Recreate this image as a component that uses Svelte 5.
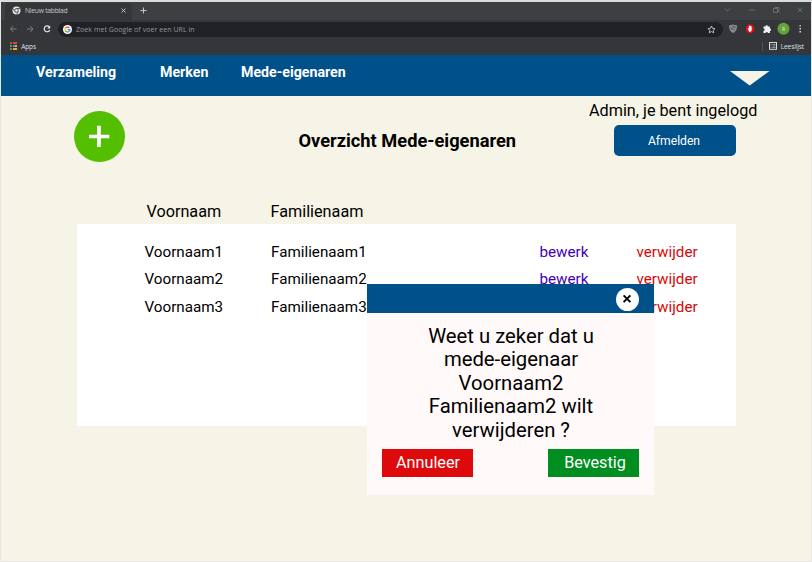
<script>
  const people = [1, 2, 3].map((n) => ({ first: `Voornaam${n}`, last: `Familienaam${n}` }));
  const question = ['Weet u zeker dat u', 'mede-eigenaar', 'Voornaam2', 'Familienaam2 wilt', 'verwijderen ?'];
  const appColors = ['#d34a3c', '#d34a3c', '#d34a3c', '#3fa35a', '#4a86e8', '#e0b03a', '#3fa35a', '#e0b03a', '#e0b03a'];
</script>

<div class="frame">
  <div class="browser">
    <div class="tabs">
      <div class="tab">
        <svg class="favicon" width="9" height="9" viewBox="0 0 18 18">
          <circle cx="9" cy="9" r="8" fill="#e4e5e7" />
          <path d="M9 5h7M5.500 11L2 5M12.500 11L9 17" stroke="#35363a" stroke-width="1.4" />
          <circle cx="9" cy="9" r="3.7" fill="#e4e5e7" stroke="#35363a" stroke-width="1.6" />
        </svg>
        <span class="title">Nieuw tabblad</span>
        <svg width="5" height="5" viewBox="0 0 5 5"><path d="M.5 .5l4 4M4.500 .5l-4 4" stroke="#cfd0d2" stroke-width=".9" /></svg>
      </div>
      <svg class="new" width="7" height="7" viewBox="0 0 7 7"><path d="M3.500 .5v6M.5 3.500h6" stroke="#c3c6c8" stroke-width="1" /></svg>
      <svg class="window" width="82" height="10" viewBox="0 0 82 10" fill="none" stroke="#73777a" stroke-width=".8">
        <path d="M3 3.500l2.500 2.500L8 3.500M27 5h6M51.500 3.500h4v4h-4zM53 3.500v-1h4v4h-1.500M75.500 2.500l5 5M80.500 2.500l-5 5" />
      </svg>
    </div>
    <div class="toolbar">
      <svg class="arrows" width="46" height="12" viewBox="0 0 46 12" fill="none">
        <path d="M7.500 6H1.500M4.300 3L1.500 6l2.800 3M18 6h6M21.200 3L24 6l-2.800 3" stroke="#818386" stroke-width=".9" />
        <path d="M40.300 3.900A2.900 2.900 0 1 0 40.800 7" stroke="#e3e4e6" stroke-width="1.200" />
        <path d="M41.200 2.500v3h-3z" fill="#e3e4e6" />
      </svg>
      <div class="omnibox">
        <svg width="9" height="9" viewBox="0 0 18 18">
          <circle cx="9" cy="9" r="9" fill="#fff" />
          <g fill="none" stroke-width="2.500">
            <path d="M12.700 5.700A5 5 0 0 0 4.700 6.500" stroke="#ea4335" />
            <path d="M4.700 6.500a5 5 0 0 0 0 5" stroke="#fbbc05" />
            <path d="M4.700 11.500a5 5 0 0 0 7.700 1.200" stroke="#34a853" />
            <path d="M12.400 12.700A5 5 0 0 0 14 9.200H9" stroke="#4285f4" />
          </g>
        </svg>
        <span>Zoek met Google of voer een URL in</span>
        <svg class="star" width="9" height="9" viewBox="0 0 18 18"><path d="M9 2l2.100 4.600 5 .6-3.700 3.400 1 5L9 13.100l-4.400 2.500 1-5L1.900 7.200l5-.6z" fill="none" stroke="#d4d5d7" stroke-width="1.700" /></svg>
      </div>
      <svg class="extensions" width="80" height="14" viewBox="0 0 80 14">
        <path d="M4 3.500l4-1 4 1c0 4-1 6-4 7.500C5 9.500 4 7.500 4 3.500z" fill="#8c8e91" />
        <path d="M5 5.500l5 3M5.800 8l4-4M7 3.500l4 2.500" stroke="#45464a" stroke-width=".7" />
        <path d="M23.300 2.500h3.400L29 4.800v3.900l-2.300 2.300h-3.400L21 8.700V4.800z" fill="#f00b12" />
        <path d="M22.800 6.300l.7-.2.4.7V4h.7v-.5h.7V4h.7v.5h.7v3.800l-1 1.400h-1.600z" fill="#fff" />
        <path d="M38.500 4.500h2a1.200 1.200 0 0 1 2.400 0h2v2.100a1.200 1.200 0 0 1 0 2.400v2h-2a1.100 1.100 0 0 0-2.200 0h-2.200V8.900a1.150 1.150 0 0 0 0-2.300z" fill="#f0f1f2" />
        <circle cx="58.500" cy="6.800" r="6" fill="#64a136" />
        <text x="58.500" y="9" text-anchor="middle">R</text>
        <path d="M74.500 3.200h1.400v1.400h-1.400zM74.500 6.100h1.400v1.400h-1.400zM74.500 9h1.400v1.400h-1.400z" fill="#e4e5e7" />
      </svg>
    </div>
    <div class="bookmarks">
      <div class="apps">
        {#each appColors as color}<i style="background:{color}"></i>{/each}
      </div>
      <span>Apps</span>
      <div class="reading">
        <svg width="8" height="8" viewBox="0 0 8 8" fill="none" stroke="#d8d9db"><rect x=".5" y=".5" width="7" height="6.800" /><path d="M1.500 2.500h1M3.500 2.500h3M1.500 4h1M3.500 4h3M1.500 5.500h1M3.500 5.500h3" stroke-width=".6" /></svg>
        <span>Leeslijst</span>
      </div>
    </div>
  </div>

  <nav>
    <a class="one">Verzameling</a>
    <a class="two">Merken</a>
    <a class="three">Mede-eigenaren</a>
    <svg width="40" height="15" viewBox="0 0 40 15"><path d="M0 0h39.500L19.700 14.500z" fill="#f6f4e6" /></svg>
  </nav>

  <main>
    <header>
      <button class="add" aria-label="Toevoegen">
        <svg width="51" height="51" viewBox="0 0 51 51"><path d="M25 14.800v21.300M15 25.500h20.300" stroke="#fff" stroke-width="3.700" /></svg>
      </button>
      <h1>Overzicht Mede-eigenaren</h1>
      <div class="account">
        <p>Admin, je bent ingelogd</p>
        <button>Afmelden</button>
      </div>
    </header>
    <div class="heads"><span>Voornaam</span><span>Familienaam</span></div>
    <section class="list">
      {#each people as person}
        <div class="row">
          <span>{person.first}</span>
          <span>{person.last}</span>
          <a class="edit">bewerk</a>
          <a class="delete">verwijder</a>
        </div>
      {/each}
    </section>
  </main>

  <div class="dialog" role="dialog">
    <div class="bar">
      <button class="close" aria-label="Sluiten">
        <svg width="23" height="23" viewBox="0 0 23 23"><path d="M7.600 7.300l6.800 6.800M14.400 7.300l-6.800 6.800" stroke="#000" stroke-width="1.900" /></svg>
      </button>
    </div>
    <div class="question">
      {#each question as line}<div>{line}</div>{/each}
    </div>
    <div class="actions">
      <button class="cancel">Annuleer</button>
      <button class="confirm">Bevestig</button>
    </div>
  </div>
</div>

<style>
  :global(body) { margin: 0; }
  * { box-sizing: border-box; }
  button { border: 0; padding: 0; margin: 0; font: inherit; color: #fff; }
  svg { display: block; flex: none; }
  .frame {
    position: relative; width: 812px; height: 562px; overflow: hidden;
    display: flex; flex-direction: column; background: #f6f4e6;
    border: 1px solid #e7e6e5; border-top: 2px solid #dcdcdb;
    font-family: Roboto, sans-serif; color: #000; white-space: nowrap;
  }
  .browser { height: 53px; font: 6.5px "Open Sans", sans-serif; color: #dfe0e2; background: #35363a; flex: none; }
  .tabs { height: 18px; display: flex; align-items: center; background: #3c4043; }
  .tab { width: 127px; height: 17px; margin: 1px 0 0 4px; padding: 0 6px 2px 6px; display: flex; align-items: center; background: #35363a; border-radius: 4px 4px 0 0; }
  .title { margin-left: 4px; flex: 1; color: #c4c6c9; letter-spacing: -.28px; font-size: 6.8px; }
  .favicon { margin-left: 1px; }
  .new { margin: -1px 0 0 8px; }
  .window { margin: -2px 7px 0 auto; }
  .toolbar { height: 18px; display: flex; align-items: center; }
  .arrows { margin-left: 8px; }
  .omnibox { width: 665px; height: 15px; margin-left: 3px; padding: 0 7px 0 5px; display: flex; align-items: center; border-radius: 8px; background: #202124; font-size: 7px; color: #95989c; }
  .omnibox span { margin-left: 4px; letter-spacing: .055px; }
  .star { margin-left: auto; }
  .extensions { margin-left: 2px; }
  .extensions text { font: 5px "Open Sans", sans-serif; fill: #e8f1e0; }
  .bookmarks { height: 17px; padding: 0 7px 1px 9px; display: flex; align-items: center; }
  .bookmarks span { letter-spacing: -.1px; }
  .apps { display: grid; grid-template-columns: repeat(3, 2px); gap: .6px; margin-right: 4px; }
  .apps i { height: 2px; }
  .reading { margin-left: auto; display: flex; align-items: center; gap: 4px; padding-left: 6px; border-left: 1px solid #505155; }
  nav { height: 41px; flex: none; background: #005089; color: #fff; display: flex; font-weight: 700; font-size: 14.200px; line-height: 16px; padding-top: 9px; }
  .one { width: 124px; margin-left: 35px; }
  .two { width: 81px; }
  nav svg { margin: 7px 41px 0 auto; }
  main { flex: 1; padding: 0 75px 0 76px; }
  header { height: 103px; display: flex; }
  .add { width: 51px; height: 51px; margin: 15px 0 0 -3px; border-radius: 50%; background: #54bf00; flex: none; }
  h1 { margin: 34px 0 0 173.500px; font-size: 18.250px; line-height: 21px; font-weight: 700; width: 218px; }
  .account { margin: 5px -22px 0 auto; width: 169px; }
  .account p { margin: 0 0 5px; font-size: 16.220px; line-height: 19px; }
  .account button { display: block; width: 122px; height: 31px; margin-left: 25px; border-radius: 5px; background: #005089; font-size: 12.150px; padding-right: 2px; }
  .heads { display: grid; grid-template-columns: 124px 1fr; padding: 2px 0 0 69.500px; height: 25px; font-size: 16.220px; line-height: 21px; }
  .list { height: 202px; background: #fff; padding: 14px 0 0 67.500px; }
  .row { display: grid; grid-template-columns: 126.500px 268.500px 97px 1fr; height: 27.400px; line-height: 28px; font-size: 15.210px; }
  .edit { color: #4300b5; }
  .delete { color: #d90707; }
  .dialog { position: absolute; left: 366px; top: 282px; width: 287px; height: 211px; background: #fff9f9; }
  .bar { height: 29px; background: #005089; display: flex; justify-content: flex-end; padding: 4px 15px 0 0; }
  .close { width: 23px; height: 23px; border-radius: 50%; background: #fff; }
  .question { margin: 12px 0 7px 1px; font-size: 20.280px; line-height: 23.400px; text-align: center; }
  .actions { display: flex; justify-content: space-between; padding: 0 15px; }
  .actions button { width: 91px; height: 28px; font-size: 16.220px; padding-bottom: 2px; }
  .actions .cancel { background: #de090a; padding-left: 1px; }
  .actions .confirm { background: #008e20; padding-left: 3px; }
</style>
